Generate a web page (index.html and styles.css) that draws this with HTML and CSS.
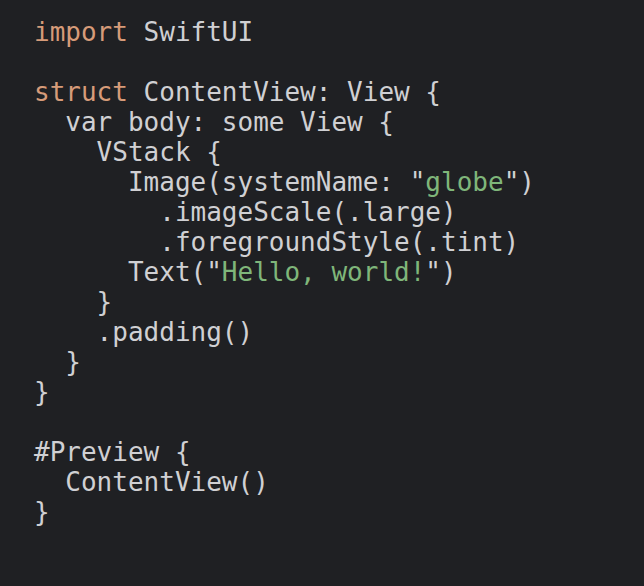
FILE: index.html
```html
<!DOCTYPE html>
<html>
<head>
<meta charset="utf-8">
<link rel="stylesheet" href="styles.css">
</head>
<body>
<pre class="code"><span class="kw">import</span> SwiftUI

<span class="kw">struct</span> ContentView: View {
  var body: some View {
    VStack {
      Image(systemName: "<span class="str">globe</span>")
        .imageScale(.large)
        .foregroundStyle(.tint)
      Text("<span class="str">Hello, world!</span>")
    }
    .padding()
  }
}

#Preview {
  ContentView()
}</pre>
</body>
</html>
```

FILE: styles.css
```css
html, body {
  margin: 0;
  padding: 0;
  background: #1f2023;
  width: 644px;
  height: 586px;
  overflow: hidden;
}
.code {
  margin: 0;
  padding: 17px 0 0 34px;
  font-family: "DejaVu Sans Mono", monospace;
  font-size: 26px;
  line-height: 30px;
  color: #d0d0d3;
}
.kw {
  color: #d69b79;
}
.str {
  color: #7fb67a;
}
```
